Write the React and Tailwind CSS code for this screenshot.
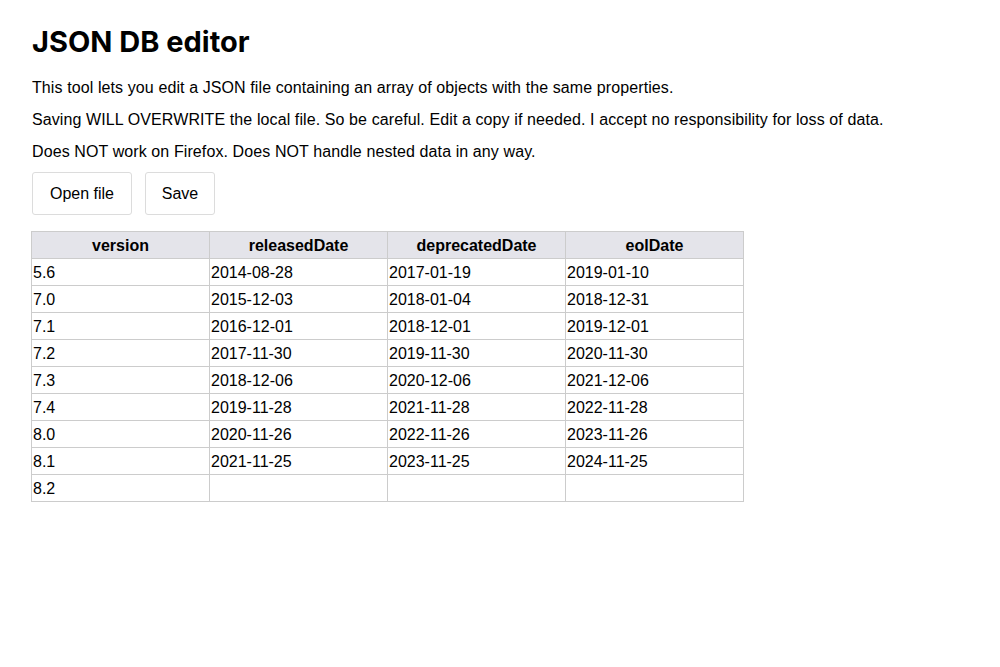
import React, { useState } from "react";

const initialRows = [
  { version: "5.6", releasedDate: "2014-08-28", deprecatedDate: "2017-01-19", eolDate: "2019-01-10" },
  { version: "7.0", releasedDate: "2015-12-03", deprecatedDate: "2018-01-04", eolDate: "2018-12-31" },
  { version: "7.1", releasedDate: "2016-12-01", deprecatedDate: "2018-12-01", eolDate: "2019-12-01" },
  { version: "7.2", releasedDate: "2017-11-30", deprecatedDate: "2019-11-30", eolDate: "2020-11-30" },
  { version: "7.3", releasedDate: "2018-12-06", deprecatedDate: "2020-12-06", eolDate: "2021-12-06" },
  { version: "7.4", releasedDate: "2019-11-28", deprecatedDate: "2021-11-28", eolDate: "2022-11-28" },
  { version: "8.0", releasedDate: "2020-11-26", deprecatedDate: "2022-11-26", eolDate: "2023-11-26" },
  { version: "8.1", releasedDate: "2021-11-25", deprecatedDate: "2023-11-25", eolDate: "2024-11-25" },
  { version: "8.2", releasedDate: "", deprecatedDate: "", eolDate: "" },
];

const columns = ["version", "releasedDate", "deprecatedDate", "eolDate"];

const App = () => {
  const [rows, setRows] = useState(initialRows);

  const updateCell = (i, key, value) => {
    setRows((prev) => prev.map((r, idx) => (idx === i ? { ...r, [key]: value } : r)));
  };

  return (
    <div className="min-h-screen bg-white text-black px-8 pt-[25px] font-['Liberation_Sans',Arial,sans-serif]">
      <h1 className="text-[29px] leading-[34px] font-bold font-['Inter',sans-serif]">
        JSON DB editor
      </h1>
      <div className="mt-[17px] text-base leading-6 flex flex-col gap-2 tracking-[0.1px]">
        <p>This tool lets you edit a JSON file containing an array of objects with the same properties.</p>
        <p>Saving WILL OVERWRITE the local file. So be careful. Edit a copy if needed. I accept no responsibility for loss of data.</p>
        <p>Does NOT work on Firefox. Does NOT handle nested data in any way.</p>
      </div>
      <div className="flex gap-[13px] mt-[8px]">
        <button className="h-[43px] w-[100px] border border-[#dcdcdc] rounded-[3px] bg-white text-base">Open file</button>
        <button className="h-[43px] w-[70px] border border-[#dcdcdc] rounded-[3px] bg-white text-base">Save</button>
      </div>
      <table className="mt-[16px] -ml-px border-collapse table-fixed w-[713px]">
        <thead>
          <tr>
            {columns.map((c) => (
              <th key={c} className="w-[178px] h-[27px] border border-[#cccccc] bg-[#e4e4ea] font-bold text-base p-0 pt-px text-center">
                {c}
              </th>
            ))}
          </tr>
        </thead>
        <tbody>
          {rows.map((r, i) => (
            <tr key={i}>
              {columns.map((c) => (
                <td key={c} className="h-[27px] border border-[#cccccc] p-0 pt-px">
                  <input
                    value={r[c]}
                    onChange={(e) => updateCell(i, c, e.target.value)}
                    className="w-full h-[24px] px-[1px] text-base outline-none bg-transparent"
                  />
                </td>
              ))}
            </tr>
          ))}
        </tbody>
      </table>
    </div>
  );
};

export default App;
